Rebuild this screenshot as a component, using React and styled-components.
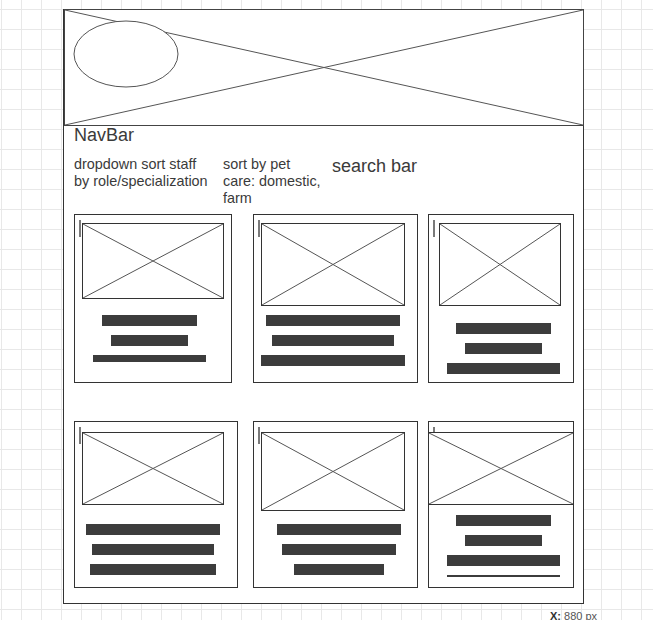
import styled, { createGlobalStyle } from 'styled-components';

const GlobalStyle = createGlobalStyle`
  html {
    height: 100%;
    overflow: hidden;
    background-color: #ffffff;
    background-image:
      linear-gradient(to right, #e8e8e8 1px, transparent 1px),
      linear-gradient(to bottom, #e8e8e8 1px, transparent 1px);
    background-size: 20px 20px;
    background-position: 1px 9px;
  }
  body {
    margin: 0;
    font-family: 'Liberation Sans', Arial, sans-serif;
    color: #333333;
  }
`;

const Frame = styled.div`
  box-sizing: border-box;
  width: 521px;
  height: 595px;
  margin: 9px 0 0 63px;
  background: #ffffff;
  border: 1px solid #333333;
  border-top: none;
`;

const Hero = styled.div`
  position: relative;
  box-sizing: border-box;
  width: 520px;
  height: 117px;
  margin-right: -1px;
  border: 1px solid #444444;
  background: #ffffff;
  svg {
    display: block;
    width: 100%;
    height: 100%;
  }
`;

const Content = styled.div`
  padding-left: 10px;
`;

const NavTitle = styled.div`
  font-size: 18px;
  line-height: 18px;
  color: #3a3a3a;
`;

const Filters = styled.div`
  display: flex;
  align-items: flex-start;
  margin-top: 12px;
  height: 50px;
`;

const FilterText = styled.div`
  width: ${(p) => p.$w}px;
  font-size: 14.4px;
  line-height: 17px;
  color: #3a3a3a;
`;

const SearchLabel = styled.div`
  margin-top: 1px;
  font-size: 18px;
  line-height: 18px;
  color: #3a3a3a;
`;

const CardGrid = styled.div`
  display: grid;
  grid-template-columns: 179px 175px 146px;
  row-gap: 38px;
  align-items: start;
  margin-top: 8px;
`;

const Card = styled.div`
  position: relative;
  box-sizing: border-box;
  width: ${(p) => p.$w}px;
  height: ${(p) => p.$h}px;
  border: 1px solid #333333;
  display: flex;
  flex-direction: column;
  align-items: flex-start;
`;

const Mark = styled.span`
  position: absolute;
  left: 4px;
  top: 5px;
  width: 2px;
  height: 17px;
  background: #7a7a7a;
  z-index: 0;
`;

const ImageBox = styled.svg`
  position: relative;
  z-index: 1;
  display: block;
  box-sizing: border-box;
  flex: none;
  width: ${(p) => p.$w}px;
  height: ${(p) => p.$h}px;
  margin-left: ${(p) => p.$x}px;
  margin-top: ${(p) => p.$y}px;
  border: 1px solid #333333;
  background: #ffffff;
  line {
    stroke: #555555;
    stroke-width: 1;
  }
`;

const Bars = styled.div`
  display: flex;
  flex-direction: column;
  align-items: flex-start;
  margin-top: ${(p) => p.$gap}px;
`;

const Bar = styled.div`
  width: ${(p) => p.$w}px;
  height: ${(p) => p.$h}px;
  margin-left: ${(p) => p.$x}px;
  background: #3c3c3c;
  & + & {
    margin-top: 9px;
  }
`;

const Coords = styled.div`
  margin: 6px 0 0 550px;
  font-size: 11px;
  line-height: 13px;
  color: #555555;
  b {
    color: #333333;
  }
`;

const cards = [
  { w: 158, h: 169, img: { x: 7, y: 8, w: 142, h: 76 }, gap: 16, bars: [{ x: 27, w: 95 }, { x: 36, w: 77 }, { x: 18, w: 113, h: 7 }] },
  { w: 165, h: 169, img: { x: 7, y: 8, w: 144, h: 83 }, gap: 9, bars: [{ x: 12, w: 134 }, { x: 18, w: 122 }, { x: 7, w: 144 }] },
  { w: 146, h: 169, img: { x: 10, y: 8, w: 122, h: 83 }, gap: 17, bars: [{ x: 27, w: 95 }, { x: 36, w: 77 }, { x: 18, w: 113 }] },
  { w: 164, h: 167, img: { x: 7, y: 10, w: 142, h: 73 }, gap: 19, bars: [{ x: 11, w: 134 }, { x: 17, w: 122 }, { x: 15, w: 126 }] },
  { w: 165, h: 167, img: { x: 7, y: 10, w: 144, h: 79 }, gap: 13, bars: [{ x: 23, w: 124 }, { x: 28, w: 114 }, { x: 40, w: 90 }] },
  { w: 146, h: 167, img: { x: -1, y: 10, w: 146, h: 73 }, gap: 10, bars: [{ x: 27, w: 95 }, { x: 36, w: 77 }, { x: 18, w: 113 }, { x: 18, w: 113, h: 2 }] },
];

const Placeholder = ({ x, y, w, h }) => (
  <ImageBox $x={x} $y={y} $w={w} $h={h}>
    <line x1="0" y1="0" x2="100%" y2="100%" />
    <line x1="0" y1="100%" x2="100%" y2="0" />
  </ImageBox>
);

const App = () => {
  return (
    <>
      <GlobalStyle />
      <Frame>
        <Hero>
          <svg>
            <line x1="0" y1="0" x2="100%" y2="100%" stroke="#555" strokeWidth="1" />
            <line x1="0" y1="100%" x2="100%" y2="0" stroke="#555" strokeWidth="1" />
            <ellipse cx="61" cy="44" rx="52" ry="33" fill="#fff" stroke="#555" strokeWidth="1" />
          </svg>
        </Hero>
        <Content>
          <NavTitle>NavBar</NavTitle>
          <Filters>
            <FilterText $w={149}>
              dropdown sort staff
              <br />
              by role/specialization
            </FilterText>
            <FilterText $w={109}>
              sort by pet
              <br />
              care: domestic,
              <br />
              farm
            </FilterText>
            <SearchLabel>search bar</SearchLabel>
          </Filters>
          <CardGrid>
            {cards.map((card, i) => (
              <Card key={i} $w={card.w} $h={card.h}>
                <Mark />
                <Placeholder {...card.img} />
                <Bars $gap={card.gap}>
                  {card.bars.map((bar, j) => (
                    <Bar key={j} $x={bar.x} $w={bar.w} $h={bar.h || 11} />
                  ))}
                </Bars>
              </Card>
            ))}
          </CardGrid>
        </Content>
      </Frame>
      <Coords>
        <b>X:</b> 880 px
      </Coords>
    </>
  );
};

export default App;
